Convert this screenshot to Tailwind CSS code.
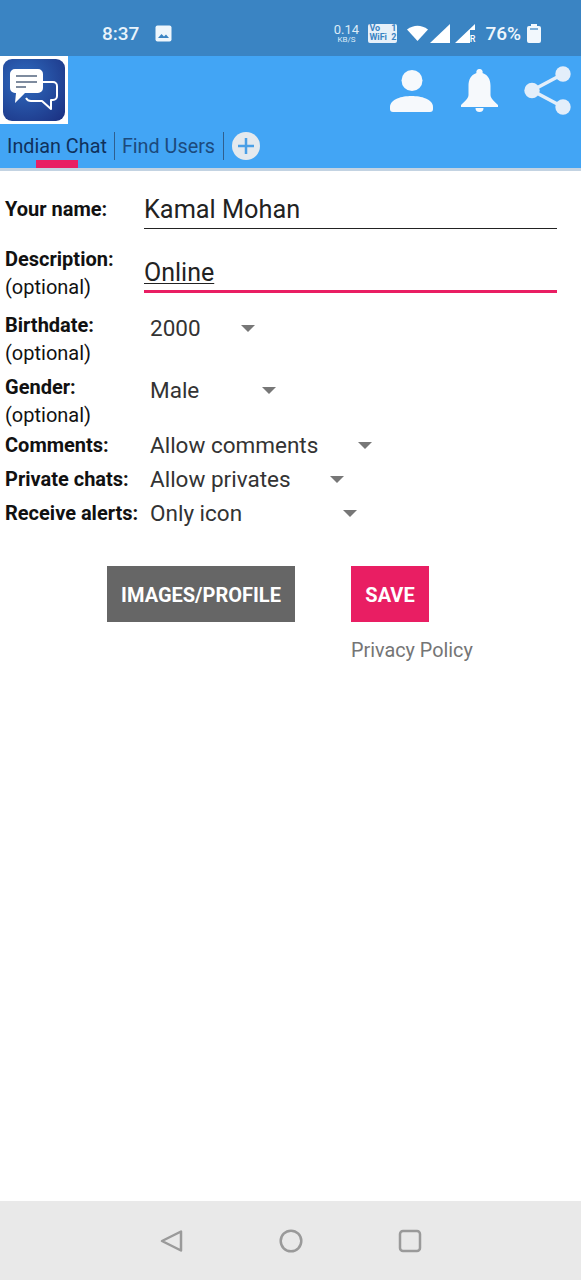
<!doctype html>
<html lang="en">

<head>
  <meta charset="UTF-8" />
  <meta name="viewport" content="width=device-width, initial-scale=1.0" />
  <title>Indian Chat</title>
  <script src="https://cdn.jsdelivr.net/npm/@tailwindcss/browser@4"></script>
</head>

<body class="bg-white font-['Roboto',sans-serif]">
  <div class="relative flex h-[1280px] w-[581px] flex-col overflow-hidden">

    <!-- Status bar -->
    <div class="flex h-[56px] shrink-0 items-center bg-[#3a84c3] pl-[102px] pt-[10px] text-white">
      <span class="text-[19px] font-medium leading-none text-[#e8f3fb]">8:37</span>
      <svg class="ml-[16px]" width="17" height="17" viewBox="0 0 17 17">
        <rect width="16" height="16" x="0.5" y="0.5" rx="2" fill="#eef6fc" />
        <path d="M3 13l3.5-4 2.500 2.500 2-2L14 13z" fill="#3a84c3" />
      </svg>
      <div class="ml-[162px] flex w-[24px] flex-col items-center text-[#dcebf7]">
        <span class="text-[13px] leading-[13px]">0.14</span>
        <span class="text-[8px] leading-[8px]">KB/S</span>
      </div>
      <div class="ml-[10px] flex h-[19px] w-[29px] flex-col rounded-[2px] bg-[#e6f0f9] px-[1px] text-[9px] font-bold leading-[9.500px] text-[#3a84c3]">
        <span class="flex justify-between"><span>Vo</span><span>1</span></span>
        <span class="flex justify-between"><span>WiFi</span><span>2</span></span>
      </div>
      <svg class="ml-[10px]" width="21" height="16" viewBox="0 0 21 16">
        <path d="M0 4.500Q10.500-3 21 4.500L10.500 16z" fill="#fff" />
      </svg>
      <svg class="ml-[2px]" width="20" height="19" viewBox="0 0 20 19">
        <path d="M20 0V19H0z" fill="#fff" />
      </svg>
      <div class="relative ml-[5px] h-[19px] w-[20px]">
        <svg width="20" height="19" viewBox="0 0 20 19">
          <path d="M20 0V6H15V19H0z" fill="#fff" />
        </svg>
        <span class="absolute bottom-[-1px] right-[0px] text-[9px] font-medium leading-[9px] text-white">R</span>
      </div>
      <span class="ml-[10px] text-[19px] font-medium leading-none text-[#eef6fc]">76%</span>
      <svg class="ml-[6px]" width="14" height="19" viewBox="0 0 14 19">
        <path d="M4 0h6v2h2a2 2 0 0 1 2 2v13a2 2 0 0 1-2 2H2a2 2 0 0 1-2-2V4a2 2 0 0 1 2-2h2z" fill="#f2f8fd" />
        <rect x="3" y="4" width="8" height="2" fill="#7fb0d9" />
      </svg>
    </div>

    <!-- App bar -->
    <div class="h-[112px] shrink-0 bg-[#42a5f5]">
      <div class="flex h-[68px] items-start">
        <div class="flex h-[68px] w-[68px] items-center justify-center bg-white">
          <svg width="64" height="64" viewBox="0 0 64 64">
            <defs>
              <radialGradient id="tile" cx="0.35" cy="0.35" r="0.85">
                <stop offset="0" stop-color="#2f6cc0" />
                <stop offset="1" stop-color="#1c3384" />
              </radialGradient>
            </defs>
            <rect x="1" y="1" width="62" height="62" rx="9" fill="url(#tile)" />
            <path d="M41 24h10a4 4 0 0 1 4 4v10a4 4 0 0 1-4 4h-2l0 9-9-8H30a6 6 0 0 1-6-3" fill="none" stroke="#fff" stroke-width="2" stroke-linejoin="round" />
            <path d="M13 11h23a5 5 0 0 1 5 5v14a5 5 0 0 1-5 5H23l-10 10 1-10h-1a5 5 0 0 1-5-5V16a5 5 0 0 1 5-5z" fill="#fff" />
            <path d="M14 18h21M14 24h21M14 29h10" stroke="#54657f" stroke-width="1.500" />
          </svg>
        </div>
        <div class="ml-auto flex items-start pr-[10px] pt-[10px]">
          <svg class="mt-[4px]" width="43" height="42" viewBox="0 0 43 42">
            <circle cx="22" cy="10.500" r="10.500" fill="#f6f9fc" />
            <path d="M0 39v-2c0-8 12-11 21.500-11S43 29 43 37v2a3 3 0 0 1-3 3H3a3 3 0 0 1-3-3z" fill="#f6f9fc" />
          </svg>
          <svg class="ml-[28px] mt-[3px]" width="37" height="43" viewBox="0 0 37 43">
            <path d="M18.500 0a3 3 0 0 1 3 4c6 2 8 7 8 13v9c0 3 4 7 7.500 10v2H0v-2c3.500-3 7.500-7 7.500-10v-9c0-6 2-11 8-13a3 3 0 0 1 3-4z" fill="#f6f9fc" />
            <path d="M14.500 39h8a4 4 0 0 1-8 0z" fill="#f6f9fc" />
          </svg>
          <svg class="ml-[26px]" width="47" height="49" viewBox="0 0 47 49">
            <path d="M39 8L8 24.500 39 41" fill="none" stroke="#e3eefa" stroke-width="3.500" />
            <circle cx="39" cy="8" r="7.700" fill="#e3eefa" />
            <circle cx="8" cy="24.500" r="7.700" fill="#e3eefa" />
            <circle cx="39" cy="41" r="7.700" fill="#e3eefa" />
          </svg>
        </div>
      </div>
      <!-- Tabs -->
      <div class="flex h-[44px] items-center pl-[7px] text-[19.800px] leading-none">
        <div class="relative flex h-[44px] items-center pr-[7px]">
          <span class="pt-[1px] text-[#10315c]">Indian Chat</span>
          <span class="absolute bottom-0 left-[29px] h-[8px] w-[42px] bg-[#e91e63]"></span>
        </div>
        <span class="h-[28px] w-[1px] bg-[#2f5f8f]"></span>
        <span class="pl-[7px] pr-[8px] pt-[1px] text-[#1c4a7c]">Find Users</span>
        <span class="h-[28px] w-[1px] bg-[#2f5f8f]"></span>
        <span class="ml-[8px] flex h-[28px] w-[28px] items-center justify-center rounded-full bg-[#e4e9ee]">
          <svg width="18" height="18" viewBox="0 0 18 18">
            <path d="M9 1v16M1 9h16" stroke="#4a9fe6" stroke-width="2.500" />
          </svg>
        </span>
      </div>
    </div>
    <div class="h-[3px] shrink-0 bg-[#c3d3e2]"></div>

    <!-- Form -->
    <div class="flex-1 px-[5px] pt-[24px] text-[20px] leading-[28px] text-[#111]">
      <div class="flex">
        <label class="w-[139px] shrink-0 font-bold">Your name:</label>
        <div class="-mt-[4px] h-[38px] w-[413px] border-b border-[#222] pt-[1px] text-[25.300px] leading-[36px] text-[#222]">Kamal Mohan</div>
      </div>
      <div class="mt-[16px] flex">
        <label class="w-[139px] shrink-0"><span class="block font-bold">Description:</span>(optional)</label>
        <div class="mt-[11px] h-[37px] w-[413px] border-b-[3px] border-[#e91e63] text-[25px] leading-[34px] text-[#222]"><span class="underline decoration-1 underline-offset-2">Online</span></div>
      </div>
      <div class="mt-[10px] flex">
        <label class="w-[145px] shrink-0"><span class="block font-bold">Birthdate:</span>(optional)</label>
        <div class="mt-[3px] flex h-[28px] items-center text-[22.500px] text-[#333]">
          <span class="w-[91px]">2000</span>
          <span class="h-0 w-0 border-x-[7px] border-t-[7px] border-x-transparent border-t-[#777]"></span>
        </div>
      </div>
      <div class="mt-[6px] flex">
        <label class="w-[145px] shrink-0"><span class="block font-bold">Gender:</span>(optional)</label>
        <div class="mt-[3px] flex h-[28px] items-center text-[22.500px] text-[#333]">
          <span class="w-[112px]">Male</span>
          <span class="h-0 w-0 border-x-[7px] border-t-[7px] border-x-transparent border-t-[#777]"></span>
        </div>
      </div>
      <div class="mt-[2px] flex">
        <label class="w-[145px] shrink-0 font-bold">Comments:</label>
        <div class="flex h-[28px] items-center text-[22.500px] text-[#333]">
          <span class="w-[208px]">Allow comments</span>
          <span class="h-0 w-0 border-x-[7px] border-t-[7px] border-x-transparent border-t-[#777]"></span>
        </div>
      </div>
      <div class="mt-[6px] flex">
        <label class="w-[145px] shrink-0 font-bold">Private chats:</label>
        <div class="flex h-[28px] items-center text-[22.500px] text-[#333]">
          <span class="w-[180px]">Allow privates</span>
          <span class="h-0 w-0 border-x-[7px] border-t-[7px] border-x-transparent border-t-[#777]"></span>
        </div>
      </div>
      <div class="mt-[6px] flex">
        <label class="w-[145px] shrink-0 font-bold">Receive alerts:</label>
        <div class="flex h-[28px] items-center text-[22.500px] text-[#333]">
          <span class="w-[193px]">Only icon</span>
          <span class="h-0 w-0 border-x-[7px] border-t-[7px] border-x-transparent border-t-[#777]"></span>
        </div>
      </div>

      <!-- Buttons -->
      <div class="mt-[39px] flex pl-[102px]">
        <button class="h-[56px] w-[188px] bg-[#666] pt-[1px] text-[20px] font-bold text-white">IMAGES/PROFILE</button>
        <div class="ml-[56px]">
          <button class="block h-[56px] w-[78px] bg-[#e91e63] pt-[1px] text-[20px] font-bold text-white">SAVE</button>
          <a class="mt-[15px] block whitespace-nowrap text-[19.800px] leading-[28px] text-[#757575]">Privacy Policy</a>
        </div>
      </div>
    </div>

    <!-- Navigation bar -->
    <div class="flex h-[79px] shrink-0 items-center justify-center gap-[95px] bg-[#e9e9e9]">
      <svg width="24" height="24" viewBox="0 0 24 24">
        <path d="M21 2.500V21.500L2 12z" fill="none" stroke="#9a9a9a" stroke-width="2.500" stroke-linejoin="round" />
      </svg>
      <svg width="24" height="24" viewBox="0 0 24 24">
        <circle cx="12" cy="12" r="10.300" fill="none" stroke="#9a9a9a" stroke-width="2.500" />
      </svg>
      <svg width="24" height="24" viewBox="0 0 24 24">
        <rect x="2" y="2" width="20" height="20" rx="3" fill="none" stroke="#9a9a9a" stroke-width="2.500" />
      </svg>
    </div>
  </div>
</body>

</html>
